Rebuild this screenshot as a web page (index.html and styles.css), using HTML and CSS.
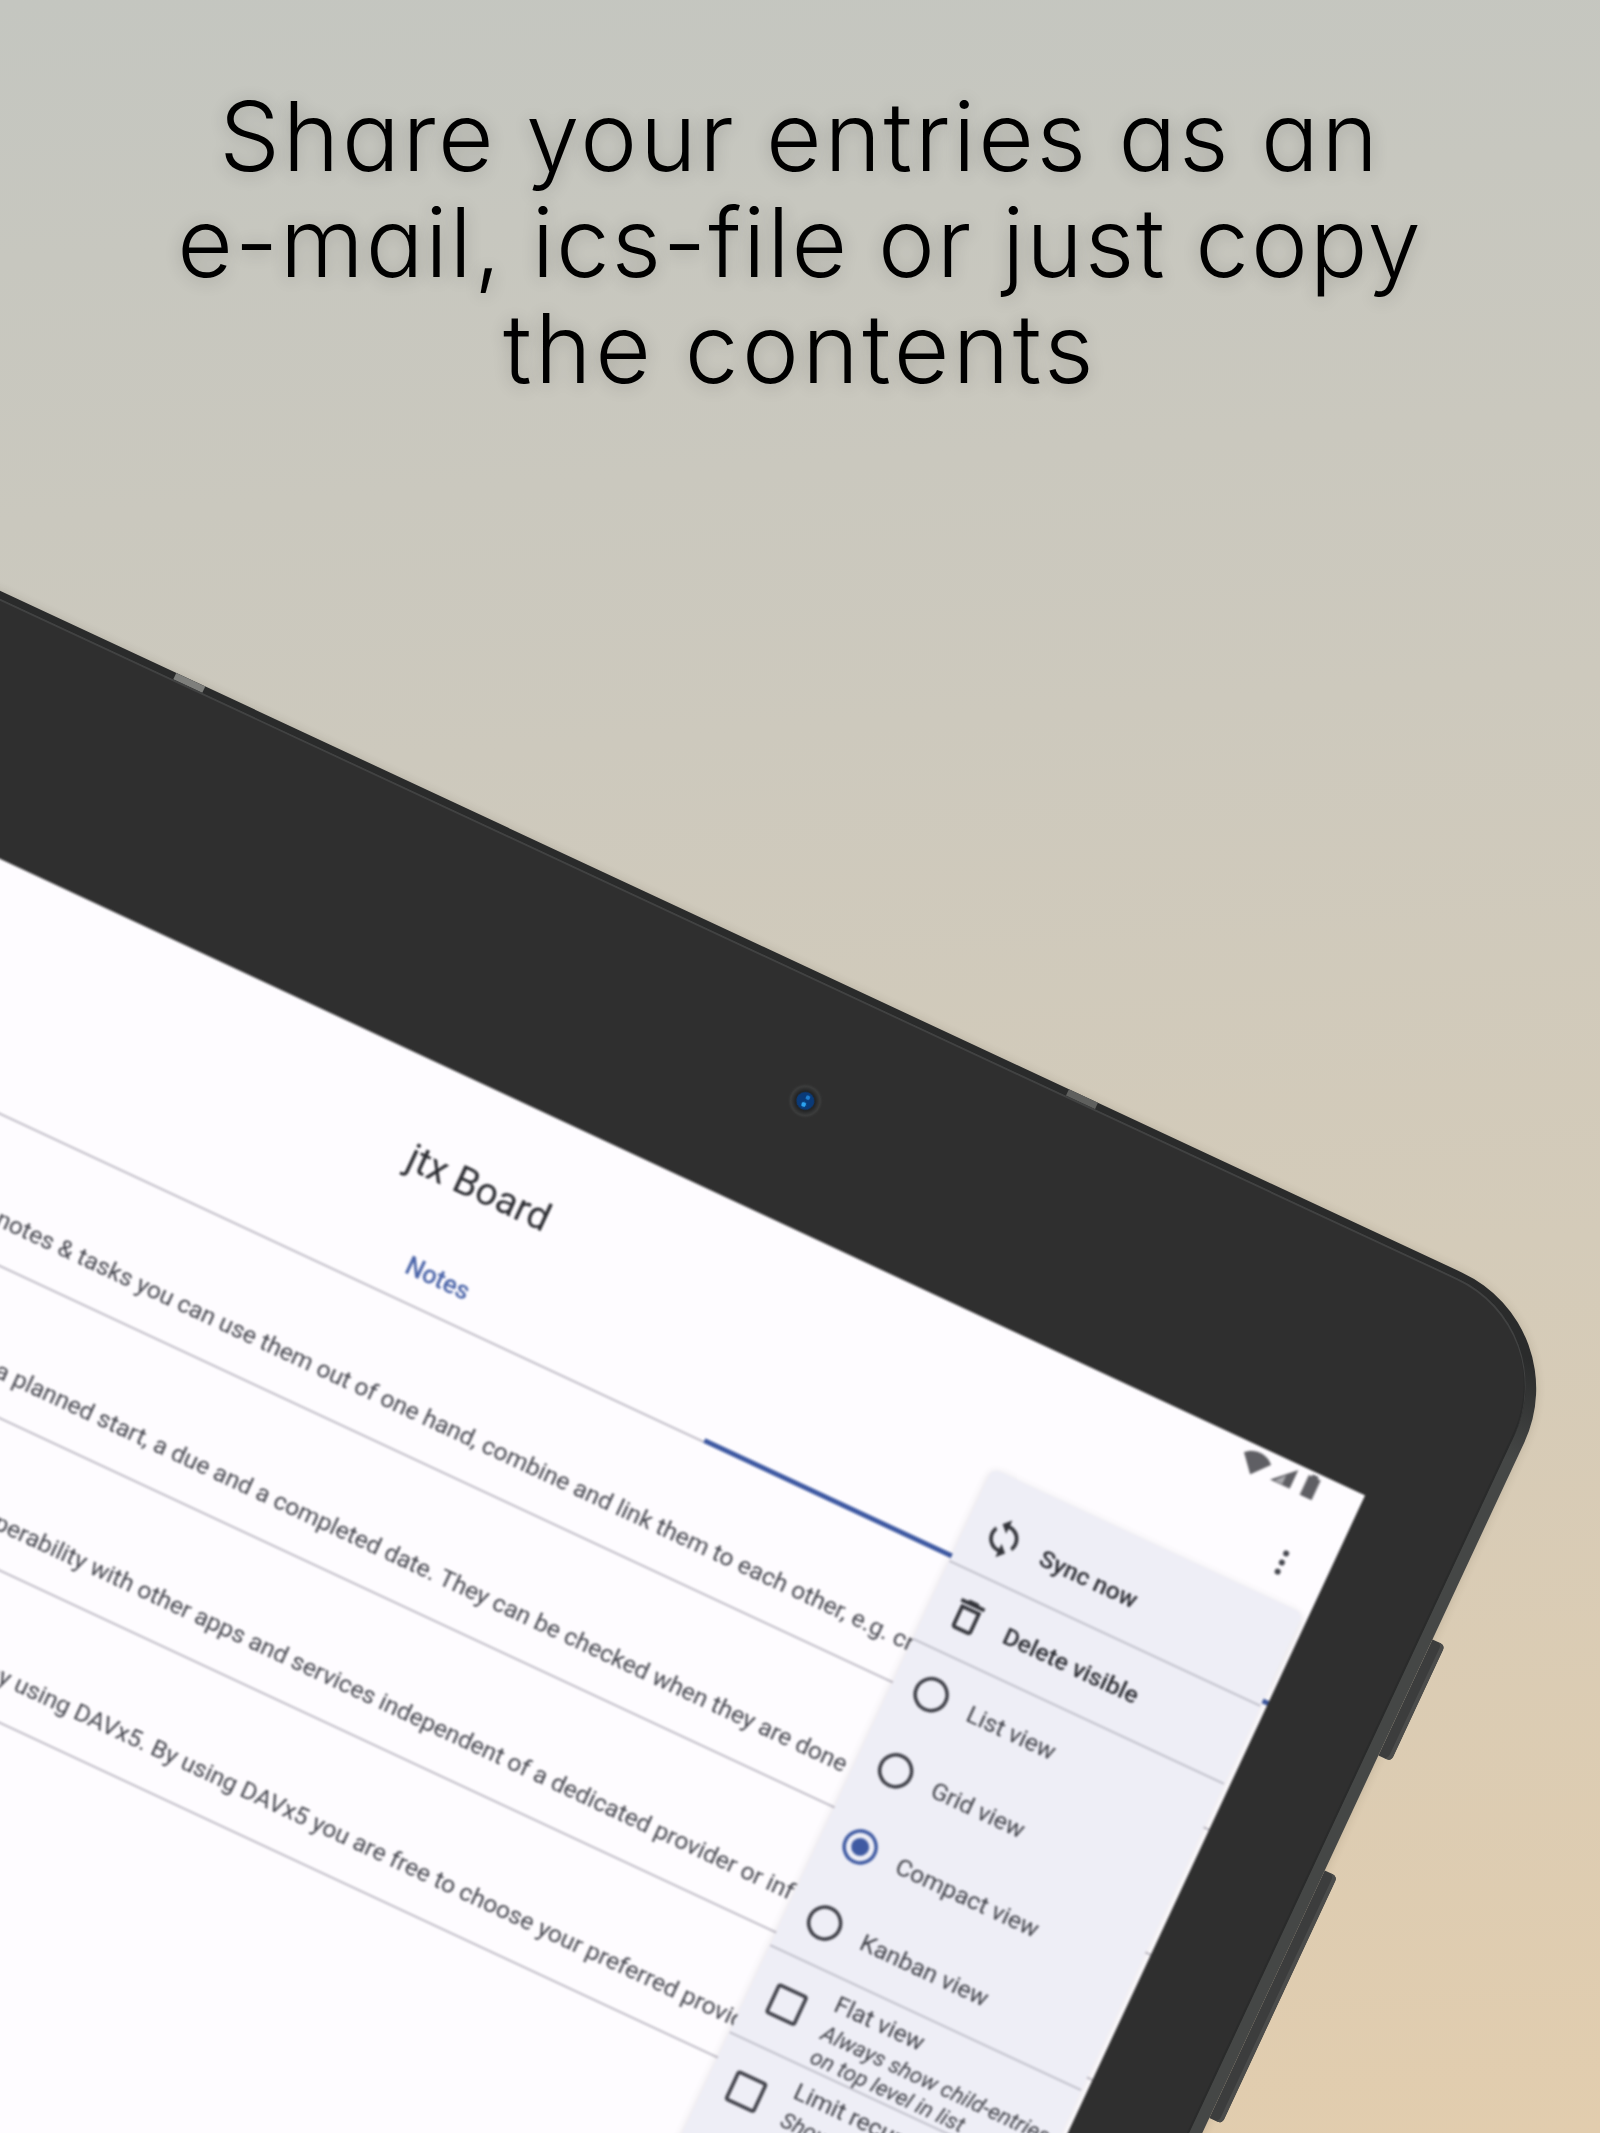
FILE: index.html
```html
<!DOCTYPE html>
<html lang="en">
<head>
<meta charset="utf-8">
<title>jtx Board</title>
<link rel="stylesheet" href="styles.css">
</head>
<body>
<main class="stage">
  <h1 class="headline"><span class="line line-a">Share your entries as an</span><span class="line line-b">e-mail, ics-file or just copy</span><span class="line line-c">the contents</span></h1>
  <div class="tablet">
    <span class="button button-a"></span>
    <span class="button button-b"></span>
    <span class="antenna antenna-a"></span>
    <span class="antenna antenna-b"></span>
    <div class="bezel">
      <svg class="camera" viewBox="0 0 36 36" aria-hidden="true">
        <defs><radialGradient id="camring" cx="50%" cy="50%" r="50%"><stop offset="55%" stop-color="#232425"/><stop offset="82%" stop-color="#3c3d3d"/><stop offset="100%" stop-color="#2f2f2f" stop-opacity="0"/></radialGradient></defs>
        <circle cx="18" cy="18" r="18" fill="url(#camring)"/>
        <circle cx="18" cy="18" r="9" fill="#0a3a78"/>
        <circle cx="19" cy="14" r="2.2" fill="#1f7fd0"/>
        <circle cx="18" cy="22" r="2.4" fill="#2ba3f0"/>
      </svg>
      <div class="screen">
        <div class="status">
          <svg class="status-icon status-wifi" viewBox="0 0 24 24"><path d="M12 22 0 8c3-3 7-5 12-5s9 2 12 5z"/></svg>
          <svg class="status-icon" viewBox="0 0 24 24"><path d="M2 22 22 3v19z"/><path class="signal-empty" d="M14 21V12l-8 9z"/></svg>
          <svg class="status-icon" viewBox="0 0 24 24"><path d="M9 1h6v2h3v20H6V3h3z"/></svg>
        </div>
        <div class="toolbar">
          <span class="toolbar-title">jtx Board</span>
          <svg class="overflow" viewBox="0 0 10 30"><circle cx="5" cy="5" r="3"/><circle cx="5" cy="15" r="3"/><circle cx="5" cy="25" r="3"/></svg>
        </div>
        <div class="tabs">
          <span class="tab">Journals</span>
          <span class="tab tab-on">Notes</span>
          <span class="tab">Tasks</span>
          <span class="indicator"></span>
        </div>
        <div class="row"><p class="row-text row-text-a">With notes &amp; tasks you can use them out of one hand, combine and link them to each other, e.g. create</p></div>
        <div class="row"><p class="row-text row-text-b">with a planned start, a due and a completed date. They can be checked when they are done</p></div>
        <div class="row"><p class="row-text row-text-c">interoperability with other apps and services independent of a dedicated provider or infrastructure</p></div>
        <div class="row"><p class="row-text row-text-d">Sync by using DAVx5. By using DAVx5 you are free to choose your preferred provider</p></div>

        <div class="menu">
          <div class="item item-action">
            <svg class="icon" viewBox="0 0 24 24"><path d="M12 4V1L8 5l4 4V6c3.31 0 6 2.69 6 6 0 1.01-.25 1.97-.7 2.8l1.46 1.46C19.54 15.03 20 13.57 20 12c0-4.42-3.58-8-8-8zm0 14c-3.31 0-6-2.69-6-6 0-1.01.25-1.97.7-2.8L5.24 7.74C4.46 8.97 4 10.43 4 12c0 4.42 3.58 8 8 8v3l4-4-4-4v3z"/></svg>
            <span>Sync now</span>
          </div>
          <div class="item item-action item-split">
            <svg class="icon" viewBox="0 0 24 24"><path d="M16 9v10H8V9h8m-1.5-6h-5l-1 1H5v2h14V4h-3.5l-1-1zM18 7H6v12c0 1.1.9 2 2 2h8c1.1 0 2-.9 2-2V7z"/></svg>
            <span>Delete visible</span>
          </div>
          <div class="item item-split">
            <svg class="icon" viewBox="0 0 44 44"><circle class="radio" cx="22" cy="22" r="16"/></svg>
            <span>List view</span>
          </div>
          <div class="item">
            <svg class="icon" viewBox="0 0 44 44"><circle class="radio" cx="22" cy="22" r="16"/></svg>
            <span>Grid view</span>
          </div>
          <div class="item">
            <svg class="icon" viewBox="0 0 44 44"><circle class="radio radio-on" cx="22" cy="22" r="16"/><circle class="radio-dot" cx="22" cy="22" r="9"/></svg>
            <span>Compact view</span>
          </div>
          <div class="item">
            <svg class="icon" viewBox="0 0 44 44"><circle class="radio" cx="22" cy="22" r="16"/></svg>
            <span>Kanban view</span>
          </div>
          <div class="item item-split item-check">
            <svg class="icon" viewBox="0 0 44 44"><rect class="check" x="7" y="7" width="30" height="30" rx="2"/></svg>
            <div class="check-text"><span>Flat view</span><small>Always show child-entries<br>on top level in list</small></div>
          </div>
          <div class="item item-split item-check">
            <svg class="icon" viewBox="0 0 44 44"><rect class="check" x="7" y="7" width="30" height="30" rx="2"/></svg>
            <div class="check-text"><span>Limit recurring</span><small>Show only the next<br>recurring entry</small></div>
          </div>
        </div>
      </div>
    </div>
  </div>
</main>
</body>
</html>
```
FILE: styles.css
```css
* { box-sizing: border-box; }
html, body { margin: 0; padding: 0; }
.stage {
  position: relative;
  width: 1600px;
  height: 2133px;
  overflow: hidden;
  background: linear-gradient(176deg, #c4c6c0 0%, #cdc9bd 35%, #d4cbb9 60%, #e2cdae 100%);
  font-family: Roboto, "Noto Sans", sans-serif;
}
.headline {
  margin: 0;
  padding-top: 83px;
  font-family: Inter, "Noto Sans", sans-serif;
  font-feature-settings: "cv11" 1;
  font-weight: 360;
  font-size: 96px;
  line-height: 106px;
  text-align: center;
  color: #000;
  text-shadow: 0 2px 18px rgba(0, 0, 0, .2);
}
.line { display: block; }
.line-a { letter-spacing: 2.7px; }
.line-b { letter-spacing: 1.85px; }
.line-c { letter-spacing: 3.5px; }
.tablet {
  position: absolute;
  left: -334px;
  top: 435px;
  width: 2110px;
  height: 1500px;
  padding: 7px 12px 0;
  border-radius: 128px;
  transform: rotate(25deg);
  transform-origin: 0 0;
  background: linear-gradient(to bottom, #2a2b2b 0, #2a2b2b 50px, #454746 150px, #454746 100%);
  box-shadow: 0 0 10px rgba(60, 50, 30, .16);
}
.bezel {
  position: relative;
  height: 100%;
  padding: 236px 110px 0;
  border-radius: 118px;
  background: #2f2f2f;
  box-shadow: inset 0 2px 0 #414242, inset -2px 0 0 #2a2b2b;
}
.button {
  position: absolute;
  left: 100%;
  width: 14px;
  border-radius: 0 5px 5px 0;
  background: #3c3d3d;
  box-shadow: inset -4px 0 0 #4b4c4b;
}
.button-a { top: 345px; height: 128px; }
.button-b { top: 600px; height: 273px; }
.antenna {
  position: absolute;
  top: 0;
  width: 32px;
  height: 9px;
}
.antenna-a { left: 563px; background: #7e7f7c; }
.antenna-b { left: 1548px; background: #5f605e; }
.camera {
  position: absolute;
  left: 1284px;
  top: 97px;
  width: 36px;
  height: 36px;
  filter: blur(.6px);
}
.screen {
  position: relative;
  width: 1866px;
  height: 1166px;
  overflow: hidden;
  background: #fefcff;
  filter: blur(.8px);
}
.status {
  display: flex;
  justify-content: flex-end;
  align-items: flex-start;
  gap: 3px;
  height: 40px;
  padding: 2px 40px 0 0;
}
.status-icon { width: 26px; height: 26px; fill: #5f5f64; }
.status-wifi { width: 30px; height: 30px; }
.signal-empty { fill: #a9a9ad; }
.toolbar {
  display: grid;
  grid-template-columns: 1fr auto 1fr;
  align-items: center;
  height: 112px;
}
.toolbar-title {
  grid-column: 2;
  font-size: 39px;
  color: #2b2c31;
}
.overflow {
  grid-column: 3;
  justify-self: end;
  width: 10px;
  height: 30px;
  margin-right: 42px;
  fill: #44464d;
}
.tabs {
  position: relative;
  display: grid;
  grid-template-columns: repeat(3, 1fr);
  height: 80px;
  padding: 8px 0 0 2px;
  border-bottom: 2px solid #c0bdc7;
}
.tab {
  display: flex;
  align-items: center;
  justify-content: center;
  font-size: 25.5px;
  font-weight: 500;
  color: #46474f;
}
.tab-on { color: #4a64a8; }
.indicator {
  position: absolute;
  right: 0;
  bottom: -2px;
  width: 622px;
  height: 5px;
  background: #3f5aa2;
}
.row {
  display: flex;
  align-items: flex-end;
  height: 138px;
  padding-bottom: 27px;
  border-bottom: 2px solid #c0bdc7;
}
.row-text {
  margin: 0;
  font-size: 24.6px;
  line-height: 30px;
  white-space: nowrap;
  color: #44454d;
}
.row-text-a { padding-left: 454px; }
.row-text-b { padding-left: 520px; }
.row-text-c { padding-left: 573px; }
.row-text-d { padding-left: 632px; }
.menu {
  position: absolute;
  top: 133px;
  right: 6px;
  width: 343px;
  height: 800px;
  padding-top: 17px;
  border-radius: 8px;
  background: #eeeef6;
  box-shadow: 0 2px 8px rgba(0, 0, 0, .12);
  color: #3f4047;
  font-size: 24.6px;
}
.item {
  display: flex;
  align-items: center;
  gap: 19px;
  height: 84px;
  padding-left: 18px;
}
.item-action { font-weight: 500; color: #2b2c32; }
.item-split { border-top: 2px solid #c2c1cb; height: 86px; }
.item-check { align-items: flex-start; height: 96px; padding-top: 24px; }
.icon { flex: none; width: 44px; height: 44px; fill: #33343a; }
.radio { fill: none; stroke: #3c3d45; stroke-width: 3.5; }
.radio-on { stroke: #3f5aa2; }
.radio-dot { fill: #3f5aa2; }
.check { fill: none; stroke: #3c3d45; stroke-width: 3.5; }
.check-text { display: flex; flex-direction: column; margin: -18px 0 0 3px; white-space: nowrap; }
.check-text span { line-height: 36px; }
.check-text small { font-size: 22.4px; font-style: italic; line-height: 26px; }
```
